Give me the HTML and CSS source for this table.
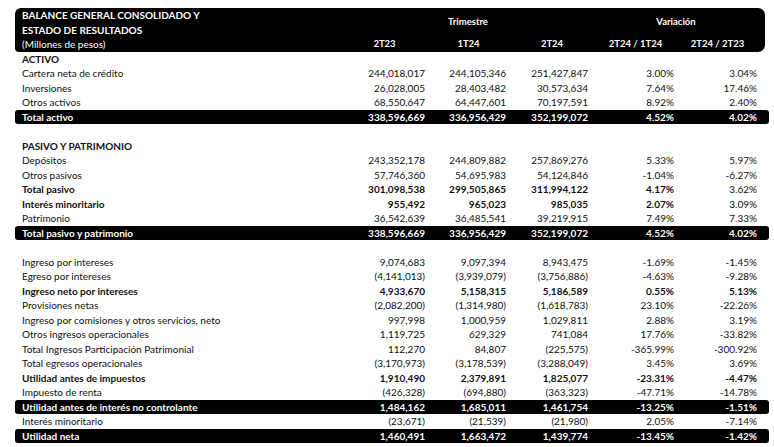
FILE: index.html
```html
<!DOCTYPE html>
<html lang="es">
<head>
<meta charset="utf-8">
<title>Balance General Consolidado</title>
<link rel="stylesheet" href="styles.css">
</head>
<body>
<div class="sheet">
  <div class="head">
    <div class="h-title">BALANCE GENERAL CONSOLIDADO Y<br>ESTADO DE RESULTADOS</div>
    <div class="h-group h-trim">Trimestre</div>
    <div class="h-group h-var">Variación</div>
    <div class="h-unit">(Millones de pesos)</div>
    <div class="h-col">2T23</div>
    <div class="h-col">1T24</div>
    <div class="h-col">2T24</div>
    <div class="h-col">2T24 / 1T24</div>
    <div class="h-col">2T24 / 2T23</div>
  </div>

  <div class="row b"><span>ACTIVO</span></div>
  <div class="row"><span>Cartera neta de crédito</span><span>244,018,017</span><span>244,105,346</span><span>251,427,847</span><span>3.00%</span><span>3.04%</span></div>
  <div class="row"><span>Inversiones</span><span>26,028,005</span><span>28,403,482</span><span>30,573,634</span><span>7.64%</span><span>17.46%</span></div>
  <div class="row"><span>Otros activos</span><span>68,550,647</span><span>64,447,601</span><span>70,197,591</span><span>8.92%</span><span>2.40%</span></div>
  <div class="row bar"><span>Total activo</span><span>338,596,669</span><span>336,956,429</span><span>352,199,072</span><span>4.52%</span><span>4.02%</span></div>
  <div class="row"></div>

  <div class="row b"><span>PASIVO Y PATRIMONIO</span></div>
  <div class="row"><span>Depósitos</span><span>243,352,178</span><span>244,809,882</span><span>257,869,276</span><span>5.33%</span><span>5.97%</span></div>
  <div class="row"><span>Otros pasivos</span><span>57,746,360</span><span>54,695,983</span><span>54,124,846</span><span>-1.04%</span><span>-6.27%</span></div>
  <div class="row b"><span>Total pasivo</span><span>301,098,538</span><span>299,505,865</span><span>311,994,122</span><span>4.17%</span><span class="n">3.62%</span></div>
  <div class="row b"><span>Interés minoritario</span><span>955,492</span><span>965,023</span><span>985,035</span><span>2.07%</span><span class="n">3.09%</span></div>
  <div class="row"><span>Patrimonio</span><span>36,542,639</span><span>36,485,541</span><span>39,219,915</span><span>7.49%</span><span>7.33%</span></div>
  <div class="row bar"><span>Total pasivo y patrimonio</span><span>338,596,669</span><span>336,956,429</span><span>352,199,072</span><span>4.52%</span><span>4.02%</span></div>
  <div class="row"></div>

  <div class="row"><span>Ingreso por intereses</span><span>9,074,683</span><span>9,097,394</span><span>8,943,475</span><span>-1.69%</span><span>-1.45%</span></div>
  <div class="row"><span>Egreso por intereses</span><span>(4,141,013)</span><span>(3,939,079)</span><span>(3,756,886)</span><span>-4.63%</span><span>-9.28%</span></div>
  <div class="row b"><span>Ingreso neto por intereses</span><span>4,933,670</span><span>5,158,315</span><span>5,186,589</span><span>0.55%</span><span>5.13%</span></div>
  <div class="row"><span>Provisiones netas</span><span>(2,082,200)</span><span>(1,314,980)</span><span>(1,618,783)</span><span>23.10%</span><span>-22.26%</span></div>
  <div class="row"><span>Ingreso por comisiones y otros servicios, neto</span><span>997,998</span><span>1,000,959</span><span>1,029,811</span><span>2.88%</span><span>3.19%</span></div>
  <div class="row"><span>Otros ingresos operacionales</span><span>1,119,725</span><span>629,329</span><span>741,084</span><span>17.76%</span><span>-33.82%</span></div>
  <div class="row"><span>Total Ingresos Participación Patrimonial</span><span>112,270</span><span>84,807</span><span>(225,575)</span><span>-365.99%</span><span>-300.92%</span></div>
  <div class="row"><span>Total egresos operacionales</span><span>(3,170,973)</span><span>(3,178,539)</span><span>(3,288,049)</span><span>3.45%</span><span>3.69%</span></div>
  <div class="row b"><span>Utilidad antes de impuestos</span><span>1,910,490</span><span>2,379,891</span><span>1,825,077</span><span>-23.31%</span><span>-4.47%</span></div>
  <div class="row"><span>Impuesto de renta</span><span>(426,328)</span><span>(694,880)</span><span>(363,323)</span><span>-47.71%</span><span>-14.78%</span></div>
  <div class="row bar"><span>Utilidad antes de interés no controlante</span><span>1,484,162</span><span>1,685,011</span><span>1,461,754</span><span>-13.25%</span><span>-1.51%</span></div>
  <div class="row"><span>Interés minoritario</span><span>(23,671)</span><span>(21,539)</span><span>(21,980)</span><span>2.05%</span><span>-7.14%</span></div>
  <div class="row bar"><span>Utilidad neta</span><span>1,460,491</span><span>1,663,472</span><span>1,439,774</span><span>-13.45%</span><span>-1.42%</span></div>
</div>
</body>
</html>
```
FILE: styles.css
```css
html, body {
  margin: 0;
  padding: 0;
  background: #ffffff;
}

body {
  padding: 8px 5px 0 15px;
  font-family: Lato, "Liberation Sans", sans-serif;
  font-size: 10px;
  color: #0f0f0f;
}

.sheet {
  width: 754px;
}

.head {
  display: grid;
  grid-template-columns: 327px 85px 83px 84px 83px 81px;
  grid-template-rows: repeat(3, 14.5px);
  margin-right: 4px;
  padding-right: 7px;
  background: #000000;
  color: #ffffff;
  font-weight: 700;
  line-height: 14.5px;
  border-radius: 6px 7px 7px 4px;
}

.h-title {
  grid-column: 1;
  grid-row: 1 / 3;
  padding-left: 7px;
}

.h-group {
  grid-row: 1 / 3;
  display: flex;
  align-items: center;
  justify-content: center;
  font-size: 9.5px;
}

.h-trim { grid-column: 2 / 5; }
.h-var { grid-column: 5 / 7; }

.h-unit {
  grid-column: 1;
  grid-row: 3;
  padding-left: 7px;
  font-weight: 400;
}

.h-col {
  grid-row: 3;
  text-align: center;
  font-size: 9.5px;
}

.row {
  display: grid;
  grid-template-columns: 327px 85px 83px 84px 83px 81px;
  height: 14.5px;
  line-height: 14.5px;
  padding-right: 11px;
  white-space: nowrap;
}

.row > span { text-align: right; }
.row > span:first-child { text-align: left; padding-left: 7px; }
.row > span:nth-child(2) { padding-right: 2px; }
.row > span:nth-child(3) { padding-right: 4px; }
.row > span:nth-child(4) { padding-right: 6px; }
.row > span:nth-child(5) { padding-right: 3px; }
.row > span:nth-child(6) { padding-right: 1px; }

.b { font-weight: 700; }
.b .n { font-weight: 400; }

.bar {
  background: #000000;
  color: #ffffff;
  font-weight: 700;
  border-radius: 3px;
}
```
